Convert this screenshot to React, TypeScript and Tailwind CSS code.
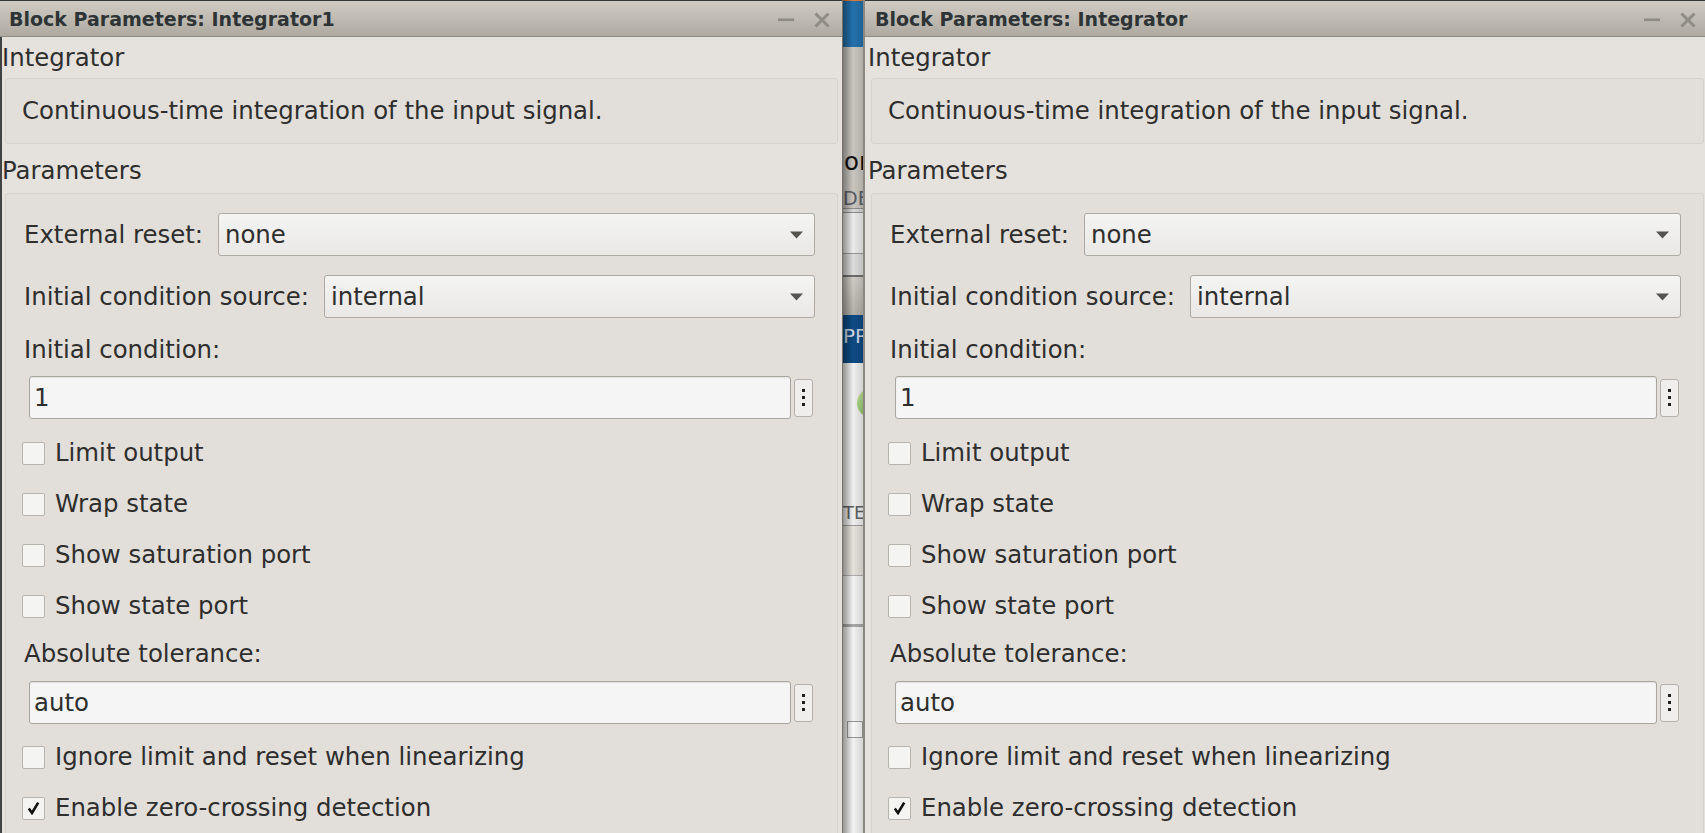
import React from "react";

function TitleBar({ title }: { title: string }) {
  return (
    <div className="flex h-[37px] shrink-0 items-center border-t border-b border-t-[#33373a] border-b-[#8d8a83] bg-gradient-to-b from-[#d0ccc4] to-[#aeaaa2] pl-[10px] pr-[12px]">
      <span className="flex-1 whitespace-nowrap text-[19px] font-bold leading-[22px] text-[#2e3436]">
        {title}
      </span>
      <div className="mt-[3px] flex items-center gap-[20px]">
        <svg width="16" height="16" viewBox="0 0 16 16">
          <rect x="0" y="6.5" width="16" height="2.6" fill="#8e8b85" />
        </svg>
        <svg width="16" height="16" viewBox="0 0 16 16">
          <path d="M1.5 1.5 L14.5 14.5 M14.5 1.5 L1.5 14.5" stroke="#8f8c86" strokeWidth="3" strokeLinecap="butt" />
        </svg>
      </div>
    </div>
  );
}

function Dropdown({ value }: { value: string }) {
  return (
    <div className="flex h-[43px] flex-1 items-center justify-between rounded-[3px] border border-[#adaaa4] bg-gradient-to-b from-[#f4f4f3] to-[#e9e8e6] pl-[6px] pr-[11px]">
      <span className="leading-[28px]">{value}</span>
      <svg width="13" height="8" viewBox="0 0 13 8">
        <path d="M0 0.5 H13 L6.5 7.5 Z" fill="#555350" />
      </svg>
    </div>
  );
}

function EditRow({ value, className }: { value: string; className: string }) {
  return (
    <div className={"ml-[5px] mr-[2px] flex h-[43px] items-center gap-[3px] " + className}>
      <div className="flex h-[43px] flex-1 items-center rounded-[3px] border border-[#a9a69f] bg-[#f5f5f5] pl-[4px] leading-[28px] shadow-[inset_0_1px_1px_rgba(0,0,0,0.08)]">
        {value}
      </div>
      <div className="flex h-[38px] w-[19px] flex-col items-center justify-center gap-[4px] rounded-[3px] border border-[#b4b1ab] bg-[#efeeec]">
        <div className="h-[3px] w-[3px] bg-[#1e1e1e]" />
        <div className="h-[3px] w-[3px] bg-[#1e1e1e]" />
        <div className="h-[3px] w-[3px] bg-[#1e1e1e]" />
      </div>
    </div>
  );
}

function CheckRow({ label, checked, className }: { label: string; checked?: boolean; className: string }) {
  return (
    <div className={"-ml-[2px] flex h-[28px] items-center gap-[10px] " + className}>
      <div className="flex h-[23px] w-[23px] items-center justify-center rounded-[2px] border border-[#b7b4ae] bg-[#f4f4f3]">
        {checked && (
          <svg width="13" height="14" viewBox="0 0 13 14">
            <path d="M1.8 7.6 L5 12 L11.2 1.6" stroke="#111111" strokeWidth="2.6" fill="none" strokeLinejoin="miter" />
          </svg>
        )}
      </div>
      <span className="whitespace-nowrap leading-[28px]">{label}</span>
    </div>
  );
}

function DialogWindow({ title, left }: { title: string; left?: boolean }) {
  return (
    <div
      className={
        "flex h-[833px] w-[846px] shrink-0 flex-col border-l-2 border-r border-l-[#8b8881] border-r-[#76736d] bg-[#e5e2dd] " +
        (left ? "-ml-[3px]" : "")
      }
    >
      <TitleBar title={title} />
      <div className={"flex flex-1 flex-col " + (left ? "shadow-[inset_3px_0_0_#404346]" : "")}>
        <div className="ml-[3px] mt-[7px] h-[28px] leading-[28px]">Integrator</div>
        <div className="ml-[6px] mr-[4px] mt-[6px] flex h-[66px] items-center rounded-[3px] border border-[#d5d2cc] bg-[#e2dfda] pl-[16px]">
          <span className="whitespace-nowrap leading-[28px]">Continuous-time integration of the input signal.</span>
        </div>
        <div className="ml-[3px] mt-[13px] h-[28px] leading-[28px]">Parameters</div>
        <div className="ml-[6px] mr-[4px] mt-[8px] flex flex-1 flex-col rounded-t-[3px] border border-b-0 border-[#d5d2cc] bg-[#e2dfda] pl-[18px] pr-[22px] pt-[19px]">
          <div className="flex h-[43px] items-center gap-[15px]">
            <span className="whitespace-nowrap leading-[28px]">External reset:</span>
            <Dropdown value="none" />
          </div>
          <div className="mt-[19px] flex h-[43px] items-center gap-[15px]">
            <span className="whitespace-nowrap leading-[28px]">Initial condition source:</span>
            <Dropdown value="internal" />
          </div>
          <div className="mt-[18px] h-[28px] leading-[28px]">Initial condition:</div>
          <EditRow value="1" className="mt-[12px]" />
          <CheckRow label="Limit output" className="mt-[20px]" />
          <CheckRow label="Wrap state" className="mt-[23px]" />
          <CheckRow label="Show saturation port" className="mt-[23px]" />
          <CheckRow label="Show state port" className="mt-[23px]" />
          <div className="mt-[20px] h-[28px] leading-[28px]">Absolute tolerance:</div>
          <EditRow value="auto" className="mt-[13px]" />
          <CheckRow label="Ignore limit and reset when linearizing" className="mt-[19px]" />
          <CheckRow label="Enable zero-crossing detection" checked className="mt-[23px]" />
        </div>
      </div>
    </div>
  );
}

function BackgroundStrip() {
  return (
    <div className="relative flex h-[833px] w-[20px] shrink-0 flex-col overflow-hidden bg-[#eeeeee]">
      <div className="h-[1px] bg-[#e07b39]" />
      <div className="h-[46px] bg-[#2370ab]" />
      <div className="h-[101px] bg-[#c9c6c0]" />
      <div className="h-[28px] whitespace-nowrap bg-[#c9c6c0] pl-[1px] leading-[28px] text-[#111111]">or</div>
      <div className="h-[5px] bg-[#c9c6c0]" />
      <div className="h-[27px] overflow-hidden whitespace-nowrap bg-[#c9c6c0] text-[19px] leading-[34px] text-[#5a6068]">DE</div>
      <div className="h-[1px] bg-[#8e8e8e]" />
      <div className="h-[3px] bg-[#d7d7d7]" />
      <div className="h-[1px] bg-[#8e8e8e]" />
      <div className="h-[40px] bg-[#ebebeb]" />
      <div className="h-[1px] bg-[#9a9a9a]" />
      <div className="h-[21px] bg-[#dcdcdc]" />
      <div className="h-[2px] bg-[#6f6f6f]" />
      <div className="h-[38px] bg-gradient-to-b from-[#cfccc6] to-[#b3b0aa]" />
      <div className="flex h-[48px] items-start overflow-hidden whitespace-nowrap bg-[#0f4a84] pt-[9px] text-[20px] leading-[24px] text-[#cfd8e6]">
        PP
      </div>
      <div className="h-[25px] bg-[#efefef]" />
      <div className="h-[32px] bg-[#efefef] pl-[14px]">
        <div className="h-[30px] w-[30px] rounded-full bg-gradient-to-br from-[#c8e6a0] to-[#5aa632]" />
      </div>
      <div className="h-[80px] overflow-hidden bg-[#efefef]" />
      <div className="h-[25px] overflow-hidden whitespace-nowrap bg-[#efefef] text-right text-[18px] leading-[25px] text-[#606060]">
        TE
      </div>
      <div className="h-[1px] bg-[#9a9a9a]" />
      <div className="h-[49px] bg-[#e5e2dc]" />
      <div className="h-[1px] bg-[#b0b0b0]" />
      <div className="h-[48px] bg-[#f2f2f2]" />
      <div className="h-[3px] bg-[#a8a8a8]" />
      <div className="h-[94px] bg-[#f2f2f2]" />
      <div className="flex h-[17px] bg-[#f2f2f2] pl-[4px]">
        <div className="h-[17px] w-[16px] border border-[#9a9a9a] bg-[#f8f8f8]" />
      </div>
      <div className="flex-1 bg-[#f2f2f2]" />
      <div className="pointer-events-none absolute inset-0 bg-gradient-to-r from-[rgba(0,0,0,0.38)] via-[rgba(0,0,0,0)] to-[rgba(0,0,0,0.12)]" />
    </div>
  );
}

export default function App() {
  return (
    <div className="flex h-[833px] w-[1705px] overflow-hidden bg-[#e5e2dd] font-['DejaVu_Sans',sans-serif] text-[24.4px] text-[#2e2e2e]">
      <DialogWindow title="Block Parameters: Integrator1" left />
      <BackgroundStrip />
      <DialogWindow title="Block Parameters: Integrator" />
    </div>
  );
}
